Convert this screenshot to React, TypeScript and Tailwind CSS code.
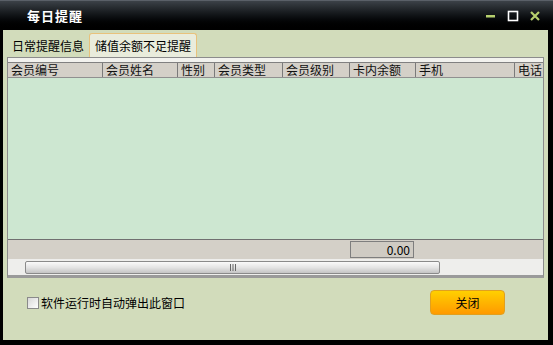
const cols = [
  { label: '会员编号', w: 94 },
  { label: '会员姓名', w: 75 },
  { label: '性别', w: 37 },
  { label: '会员类型', w: 68 },
  { label: '会员级别', w: 67 },
  { label: '卡内余额', w: 66 },
  { label: '手机', w: 99 },
  { label: '电话', w: 40 },
]

function TitleBar() {
  return (
    <div className="h-[30px] flex items-center justify-between bg-gradient-to-b from-[#3c4248] via-[#101316] to-[#000000] border-t border-[#5a6068] pl-[27px] pr-[12px]">
      <span className="text-white font-bold text-[13px] tracking-[1px]">每日提醒</span>
      <div className="flex items-center gap-[10px]">
        <svg width="12" height="12" viewBox="0 0 12 12">
          <rect x="1" y="5" width="9" height="2.5" fill="#b6cf6e" />
        </svg>
        <svg width="12" height="12" viewBox="0 0 12 12">
          <rect x="1.5" y="1.5" width="9" height="9" fill="none" stroke="#ffffff" strokeWidth="1.6" />
        </svg>
        <svg width="12" height="12" viewBox="0 0 12 12">
          <path d="M2 2 L10 10 M10 2 L2 10" stroke="#b6cf6e" strokeWidth="2.2" />
        </svg>
      </div>
    </div>
  )
}

function Tabs() {
  return (
    <div className="flex items-end h-[24px] pl-[5px]">
      <div className="h-[22px] px-[4px] flex items-center text-[12px] text-black">日常提醒信息</div>
      <div className="ml-[1px] h-[24px] px-[5px] flex items-center text-[12px] text-black bg-[#e9ecdc] border border-b-0 border-[#e8c27c] rounded-t-[3px]">
        储值余额不足提醒
      </div>
    </div>
  )
}

function Grid() {
  return (
    <div className="mx-[4px] border border-[#8c8c8c] border-b-[3px] border-b-[#9a9a9a] bg-[#f2f2ee] pt-[4px] flex flex-col h-[221px]">
      <div className="flex h-[16px] bg-[#d4d0c8] border-t border-[#808080] border-b border-b-[#909090] overflow-hidden">
        {cols.map((c, i) => (
          <div
            key={c.label}
            style={{ width: c.w }}
            className={`shrink-0 flex items-center text-[12px] text-[#111] pl-[3px] ${i > 0 ? 'border-l border-[#7a7a7a]' : ''}`}
          >
            {c.label}
          </div>
        ))}
      </div>
      <div className="flex-1 bg-[#cde7d1]" />
      <div className="h-[20px] bg-[#d4d0c8] border-t border-[#707070] flex items-center">
        <div className="ml-[342px] w-[64px] h-[17px] border border-[#7e7e7e] bg-[#cfcbc3] text-[12px] text-black flex items-center justify-end pr-[3px]">
          0.00
        </div>
      </div>
      <div className="h-[16px] bg-[#eeeeec] flex items-center">
        <div className="ml-[17px] w-[415px] h-[13px] border border-[#8a8a8a] rounded-[2px] bg-gradient-to-b from-[#fafafa] via-[#e4e4e4] to-[#c4c4c4] flex items-center justify-center">
          <svg width="8" height="7" viewBox="0 0 8 7">
            <path d="M1.5 0 V7 M4 0 V7 M6.5 0 V7" stroke="#666" strokeWidth="1" />
          </svg>
        </div>
      </div>
    </div>
  )
}

export default function App() {
  return (
    <div className="w-[553px] h-[345px] flex flex-col bg-black overflow-hidden font-['Noto_Sans_CJK_SC',_sans-serif]">
      <TitleBar />
      <div className="flex-1 flex flex-col bg-[#d2dcbb] ml-[3px] mr-[5px] mb-[5px] pt-[3px]">
        <Tabs />
        <Grid />
        <div className="flex items-start justify-between pl-[24px] pr-[43px] mt-[12px]">
          <label className="mt-[4px] flex items-center gap-[2px] text-[12px] text-black">
            <span className="w-[12px] h-[12px] border border-[#8a8a8a] bg-gradient-to-br from-[#d8d8d8] to-[#ffffff]" />
            软件运行时自动弹出此窗口
          </label>
          <button className="w-[75px] h-[25px] rounded-[4px] border border-[#e0a020] bg-gradient-to-b from-[#ffd000] via-[#ffb400] to-[#ff9a00] text-[12px] text-black">
            关闭
          </button>
        </div>
      </div>
    </div>
  )
}
